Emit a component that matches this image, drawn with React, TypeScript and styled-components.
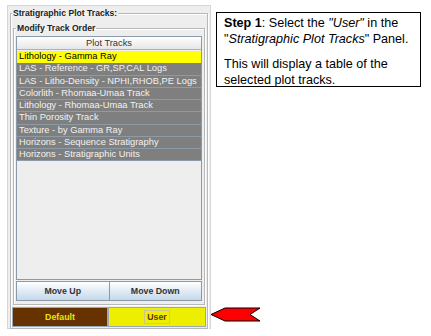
import styled, { createGlobalStyle } from "styled-components";

const GlobalStyle = createGlobalStyle`
  html, body {
    margin: 0;
    padding: 0;
    background: #ffffff;
  }
  body {
    font-family: "Liberation Sans", Arial, sans-serif;
  }
`;

const Page = styled.div`
  display: flex;
  align-items: flex-start;
  width: 431px;
  height: 336px;
  overflow: hidden;
`;

const LeftPanel = styled.div`
  box-sizing: border-box;
  margin: 5px 0 0 7px;
  width: 204px;
  height: 324px;
  padding: 2px 2px 0 2px;
  background: #eeeeee;
  border: 1px solid #d6d6d6;
  display: flex;
  flex-direction: column;
`;

const Group = styled.fieldset<{ $inset?: number }>`
  box-sizing: border-box;
  margin: 0;
  min-width: 0;
  padding: 0 ${({ $inset }) => $inset ?? 1}px 1px ${({ $inset }) => $inset ?? 1}px;
  border: 1px solid #b8b8b8;
  box-shadow: inset 1px 1px 0 #ffffff, 1px 1px 0 #ffffff;
  display: flex;
  flex-direction: column;
  flex: 1;
`;

const Legend = styled.legend`
  padding: 0 1px;
  margin-left: 0;
  font-size: 8.6px;
  line-height: 10px;
  font-weight: 700;
  color: #222222;
`;

const TrackGroup = styled(Group)`
  flex: 0 0 auto;
  height: 282px;
  margin: 5px 1px 0 1px;
  padding: 3px 2px 2px 2px;
`;

const Table = styled.div`
  box-sizing: border-box;
  height: 244px;
  border: 1px solid #8a9aa9;
  background: #eeeeee;
  display: flex;
  flex-direction: column;
`;

const HeaderCell = styled.div`
  box-sizing: border-box;
  height: 13px;
  line-height: 12px;
  text-align: center;
  font-size: 9.3px;
  color: #333333;
  background: linear-gradient(#ffffff, #e6e6e6);
  border-bottom: 1px solid #a8b4c0;
  margin-bottom: 1px;
`;

const Row = styled.div<{ $selected?: boolean }>`
  box-sizing: border-box;
  height: 12.25px;
  line-height: 11px;
  padding-left: 2px;
  font-size: 9.3px;
  white-space: nowrap;
  overflow: hidden;
  color: ${({ $selected }) => ($selected ? "#000000" : "#f2f2f2")};
  background: ${({ $selected }) => ($selected ? "#ffff00" : "#7f7f7f")};
  border-bottom: 1px solid ${({ $selected }) => ($selected ? "#ffff00" : "#8d9aa7")};
`;

const ButtonRow = styled.div`
  display: flex;
  margin-top: 1px;
`;

const MoveButton = styled.button`
  flex: 1;
  box-sizing: border-box;
  height: 20px;
  margin: 0;
  padding: 0;
  border: 1px solid #8a9aa9;
  background: linear-gradient(#ffffff 0%, #e4edf6 45%, #c6d8ea 100%);
  font-family: "Liberation Sans", Arial, sans-serif;
  font-size: 8.8px;
  font-weight: 700;
  color: #333333;
  & + & {
    border-left: none;
  }
`;

const ModeRow = styled.div`
  display: flex;
  margin-top: 2px;
  height: 20px;
`;

const ModeButton = styled.button<{ $active?: boolean }>`
  box-sizing: border-box;
  width: ${({ $active }) => ($active ? 99 : 97)}px;
  height: 20px;
  margin: 0;
  padding: 0;
  border: 1px solid #9aa8b5;
  background: ${({ $active }) => ($active ? "#eeee00" : "#663300")};
  color: ${({ $active }) => ($active ? "#663300" : "#e8e800")};
  font-family: "Liberation Sans", Arial, sans-serif;
  font-size: 8.8px;
  font-weight: 700;
  display: flex;
  align-items: center;
  justify-content: center;
`;

const FocusLabel = styled.span`
  padding: 1px 2px;
  border: 1px solid #c8c890;
  line-height: 10px;
`;

const RightColumn = styled.div`
  display: flex;
  flex-direction: column;
  margin-left: -1px;
`;

const HelpBox = styled.div`
  box-sizing: border-box;
  margin: 12px 0 0 6px;
  width: 205px;
  height: 75px;
  padding: 2px 4px 0 7px;
  border: 1px solid #000000;
  font-size: 12.6px;
  line-height: 16px;
  color: #000000;
  background: #ffffff;
  white-space: nowrap;
`;

const HelpText = styled.p`
  margin: 0 0 9px 0;
`;

const Arrow = styled.svg`
  margin-top: 220px;
  display: block;
`;

const tracks = [
  "Lithology - Gamma Ray",
  "LAS - Reference - GR,SP,CAL Logs",
  "LAS - Litho-Density - NPHI,RHOB,PE Logs",
  "Colorlith - Rhomaa-Umaa Track",
  "Lithology - Rhomaa-Umaa Track",
  "Thin Porosity Track",
  "Texture - by Gamma Ray",
  "Horizons - Sequence Stratigraphy",
  "Horizons - Stratigraphic Units",
];

export default function App() {
  return (
    <>
      <GlobalStyle />
      <Page>
        <LeftPanel>
          <Group>
            <Legend>Stratigraphic Plot Tracks:</Legend>
            <TrackGroup>
              <Legend>Modify Track Order</Legend>
              <Table>
                <HeaderCell>Plot Tracks</HeaderCell>
                {tracks.map((track, i) => (
                  <Row key={track} $selected={i === 0}>
                    {track}
                  </Row>
                ))}
              </Table>
              <ButtonRow>
                <MoveButton type="button">Move Up</MoveButton>
                <MoveButton type="button">Move Down</MoveButton>
              </ButtonRow>
            </TrackGroup>
            <ModeRow>
              <ModeButton type="button">Default</ModeButton>
              <ModeButton type="button" $active>
                <FocusLabel>User</FocusLabel>
              </ModeButton>
            </ModeRow>
          </Group>
        </LeftPanel>
        <RightColumn>
          <HelpBox>
            <HelpText>
              <b>Step 1</b>: Select the <i>"User"</i> in the
              <br />"<i>Stratigraphic Plot Tracks</i>" Panel.
            </HelpText>
            <HelpText>
              This will display a table of the
              <br />
              selected plot tracks.
            </HelpText>
          </HelpBox>
          <Arrow width="52" height="16" viewBox="0 0 52 16">
            <polygon
              points="1,7.5 15,1 50,1 40,7.5 50,14 15,14"
              fill="#ff0000"
              stroke="#000000"
              strokeWidth="1"
            />
          </Arrow>
        </RightColumn>
      </Page>
    </>
  );
}
